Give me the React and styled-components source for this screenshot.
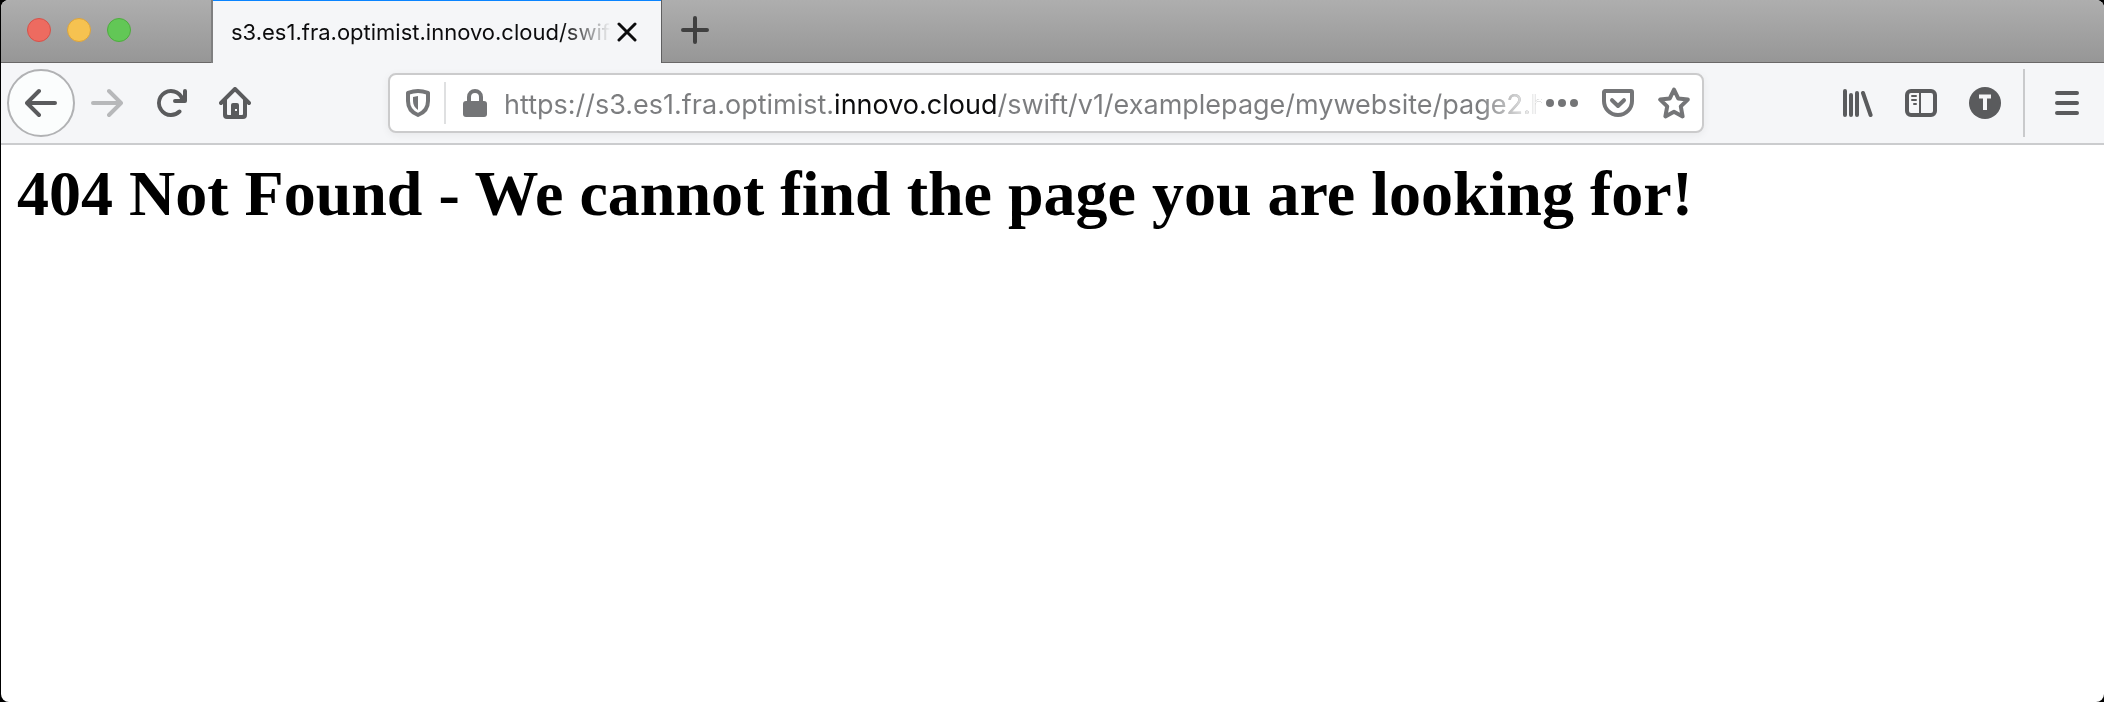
import React from "react";
import styled, { createGlobalStyle } from "styled-components";

const GlobalStyle = createGlobalStyle`
  *, *::before, *::after { box-sizing: border-box; }
  body { margin: 0; background: #000; }
`;

const Window = styled.div`
  display: flex;
  flex-direction: column;
  min-height: 100vh;
  margin-left: 1px;
  overflow: hidden;
  border-radius: 8px;
  background: #fff;
  font-family: Inter, "Liberation Sans", sans-serif;
`;

const TabBar = styled.header`
  display: flex;
  height: 63px;
  background: linear-gradient(#aeaeae, #969696);
  box-shadow: inset 0 -1px #6a6868;
`;

const WindowControls = styled.div`
  display: flex;
  align-items: center;
  gap: 16px;
  width: 212px;
  padding: 0 0 3px 26px;
  border-right: 2px solid #7f7f80;
`;

const Light = styled.button`
  width: 24px;
  height: 24px;
  padding: 0;
  border: 1px solid ${(p) => p.$edge};
  border-radius: 50%;
  background: ${(p) => p.$fill};
`;

const Tab = styled.div`
  display: flex;
  align-items: center;
  width: 448px;
  padding: 0 18px;
  border-top: 1px solid #0a84ff;
  background: #f5f6f8;
`;

const TabTitle = styled.button`
  flex: 1;
  min-width: 0;
  overflow: hidden;
  padding: 0;
  border: 0;
  background: none;
  color: #0c0c0d;
  font: 400 22px/30px Inter, sans-serif;
  text-align: left;
  white-space: nowrap;
  mask-image: linear-gradient(to left, transparent, #000 48px);
`;

const IconButton = styled.button`
  display: flex;
  flex: none;
  align-items: center;
  justify-content: center;
  width: ${(p) => p.$width || 64}px;
  height: 44px;
  padding: 0;
  border: 0;
  background: none;
  color: ${(p) => p.$color || "#5a5b5d"};
`;

const NewTab = styled(IconButton)`
  height: 60px;
`;

const TabEdge = styled.div`
  width: 1px;
  background: #5f5f60;
`;

const Toolbar = styled.nav`
  display: flex;
  align-items: center;
  height: 82px;
  padding: 0 5px 0 6px;
  border-bottom: 2px solid #cbccce;
  background: #f5f6f8;
`;

const BackButton = styled(IconButton)`
  height: 68px;
  border: 2px solid #b1b2b4;
  border-radius: 50%;
  background: #fbfdfd;
`;

const Spring = styled.div`
  flex: 0 1 121px;
`;

const UrlBar = styled.form`
  display: flex;
  flex: 1;
  align-items: center;
  min-width: 0;
  height: 60px;
  margin: 0;
  padding: 0 8px 0 2px;
  border: 2px solid #cbcbcc;
  border-radius: 8px;
  background: #fff;
  box-shadow: 0 2px 8px rgba(0, 0, 0, 0.06);
`;

const PageActions = styled.div`
  display: flex;
  gap: 16px;
`;

const Divider = styled.div`
  flex: none;
  width: 2px;
  height: ${(p) => p.$height}px;
  margin: ${(p) => p.$margin || "0"};
  background: ${(p) => p.$color};
`;

const UrlInput = styled.input`
  flex: 1;
  min-width: 0;
  height: 44px;
  padding: 2px 0 0;
  border: 0;
  outline: 0;
  color: transparent;
  background: linear-gradient(to left, #fff 4px, transparent 64px),
    linear-gradient(to right, #7c7d7f 331px, #0c0c0d 331px, #0c0c0d 494px, #7c7d7f 494px);
  background-clip: text;
  font: 400 27px/40px Inter, sans-serif;
`;

const Page = styled.main`
  flex: 1;
  padding: 12px 16px;
`;

const Heading = styled.h1`
  margin: 0;
  color: #000;
  font: 700 64px/74px "Liberation Serif", serif;
`;

const Icon = ({ children }) => (
  <svg width="32" height="32" viewBox="0 0 16 16" fill="currentColor" aria-hidden="true">
    {children}
  </svg>
);

const arrow =
  "M15 7H3.414l4.293-4.293a1 1 0 0 0-1.414-1.414l-6 6a1 1 0 0 0 0 1.414l6 6a1 1 0 0 0 1.414-1.414L3.414 9H15a1 1 0 0 0 0-2z";

export default function App() {
  return (
    <>
      <GlobalStyle />
      <Window>
        <TabBar>
          <WindowControls>
            <Light aria-label="Close window" $fill="#ed6b60" $edge="#d5524a" />
            <Light aria-label="Minimize window" $fill="#f6c250" $edge="#dba33c" />
            <Light aria-label="Zoom window" $fill="#62c756" $edge="#4eac3e" />
          </WindowControls>
          <Tab>
            <TabTitle>s3.es1.fra.optimist.innovo.cloud/swift</TabTitle>
            <IconButton aria-label="Close tab" $width={32} $color="#0c0c0d">
              <svg width="20" height="20" viewBox="0 0 20 20" fill="none" stroke="currentColor" strokeWidth="3" strokeLinecap="round" aria-hidden="true">
                <path d="M2 2l16 16M18 2L2 18" />
              </svg>
            </IconButton>
          </Tab>
          <TabEdge />
          <NewTab aria-label="New tab" $width={66} $color="#404040">
            <svg width="28" height="28" viewBox="0 0 28 28" fill="none" stroke="currentColor" strokeWidth="4" strokeLinecap="round" aria-hidden="true">
              <path d="M14 2v24M2 14h24" />
            </svg>
          </NewTab>
        </TabBar>
        <Toolbar>
          <BackButton aria-label="Back" $width={68}>
            <Icon><path d={arrow} /></Icon>
          </BackButton>
          <IconButton aria-label="Forward" $color="#b7b8ba">
            <Icon><path transform="matrix(-1 0 0 1 16 0)" d={arrow} /></Icon>
          </IconButton>
          <IconButton aria-label="Reload">
            <Icon>
              <path d="M15 1a1 1 0 0 0-1 1v2.418A6.995 6.995 0 1 0 8 15a6.954 6.954 0 0 0 4.95-2.05 1 1 0 0 0-1.414-1.414A5.019 5.019 0 1 1 12.549 6H10a1 1 0 0 0 0 2h5a1 1 0 0 0 1-1V2a1 1 0 0 0-1-1z" />
            </Icon>
          </IconButton>
          <IconButton aria-label="Home">
            <Icon>
              <path
                fillRule="evenodd"
                d="M15.707 7.293l-7-7a1 1 0 0 0-1.414 0l-7 7a1 1 0 0 0 1.414 1.414L2 8.414V14a2 2 0 0 0 2 2h8a2 2 0 0 0 2-2V8.414l.293.293a1 1 0 0 0 1.414-1.414zM4 6.414l4-4 4 4V13.500a.5.5 0 0 1-.5.500H10V9a1 1 0 0 0-1-1H7a1 1 0 0 0-1 1v5H4.500a.5.5 0 0 1-.5-.5zM8 11h1v1H8z"
              />
            </Icon>
          </IconButton>
          <Spring />
          <UrlBar onSubmit={(e) => e.preventDefault()}>
            <IconButton type="button" aria-label="Tracking protection" $width={52} $color="#747577">
              <svg width="24" height="28" viewBox="0 0 24 28" fill="none" stroke="currentColor" strokeWidth="4" strokeLinejoin="round" aria-hidden="true">
                <path d="M12 2c3.500 0 7 .8 10 1.800V12c0 6.500-3.500 11.500-10 14C5.500 23.500 2 18.500 2 12V3.800C5 2.800 8.500 2 12 2z" />
                <path d="M12 7v14C9 19 7 16 7 12V8z" fill="currentColor" stroke="none" />
              </svg>
            </IconButton>
            <Divider $height={42} $color="#dfe0e1" />
            <IconButton type="button" aria-label="Connection secure" $width={58} $color="#747577">
              <svg width="24" height="28" viewBox="0 0 24 28" aria-hidden="true">
                <path d="M6 13V8a6 6 0 0 1 12 0v5" fill="none" stroke="currentColor" strokeWidth="4" />
                <rect y="12" width="24" height="16" rx="3" fill="currentColor" />
              </svg>
            </IconButton>
            <UrlInput
              aria-label="Address"
              defaultValue="https://s3.es1.fra.optimist.innovo.cloud/swift/v1/examplepage/mywebsite/page2.html"
            />
            <PageActions>
              <IconButton type="button" aria-label="Page actions" $width={40} $color="#747577">
                <Icon>
                  <circle cx="2" cy="8" r="2" />
                  <circle cx="8" cy="8" r="2" />
                  <circle cx="14" cy="8" r="2" />
                </Icon>
              </IconButton>
              <IconButton type="button" aria-label="Save to Pocket" $width={40} $color="#747577">
                <Icon>
                  <path d="M1.500 2h13a.5.5 0 0 1 .5.500V7a7 7 0 0 1-14 0V2.500a.5.5 0 0 1 .5-.5zM5 6.600l3 2.900 3-2.900" fill="none" stroke="currentColor" strokeWidth="2" strokeLinecap="round" strokeLinejoin="round" />
                </Icon>
              </IconButton>
              <IconButton type="button" aria-label="Bookmark this page" $width={40} $color="#747577">
                <Icon>
                  <path d="M8 1.300l2.100 4.400 4.800.6-3.500 3.400.9 5L8 12.400 3.700 14.700l.9-5L1.100 6.300l4.800-.6z" fill="none" stroke="currentColor" strokeWidth="2" strokeLinejoin="round" />
                </Icon>
              </IconButton>
            </PageActions>
          </UrlBar>
          <Spring />
          <IconButton aria-label="Library">
            <Icon>
              <path d="M2 2v12M5 4v10M8 3v11M11 3l3.800 11" fill="none" stroke="currentColor" strokeWidth="2" strokeLinecap="round" />
            </Icon>
          </IconButton>
          <IconButton aria-label="Sidebars">
            <Icon>
              <rect x="1" y="2" width="14" height="12" rx="2" fill="none" stroke="currentColor" strokeWidth="2" />
              <path d="M7.500 3v10M3.500 4.500h2M3.500 6.500h2M4.500 8.500h1" fill="none" stroke="currentColor" strokeWidth="1" strokeLinecap="round" />
            </Icon>
          </IconButton>
          <IconButton aria-label="Account T">
            <Icon>
              <circle cx="8" cy="8" r="8" />
              <path d="M5 4.800h6M8 4.500v7" fill="none" stroke="#f5f6f8" strokeWidth="2" />
            </Icon>
          </IconButton>
          <Divider $height={68} $margin="0 10px 0 6px" $color="#c9cacc" />
          <IconButton aria-label="Menu">
            <Icon>
              <path d="M3 3h10M3 8h10M3 13h10" fill="none" stroke="currentColor" strokeWidth="2" strokeLinecap="round" />
            </Icon>
          </IconButton>
        </Toolbar>
        <Page>
          <Heading>404 Not Found - We cannot find the page you are looking for!</Heading>
        </Page>
      </Window>
    </>
  );
}
